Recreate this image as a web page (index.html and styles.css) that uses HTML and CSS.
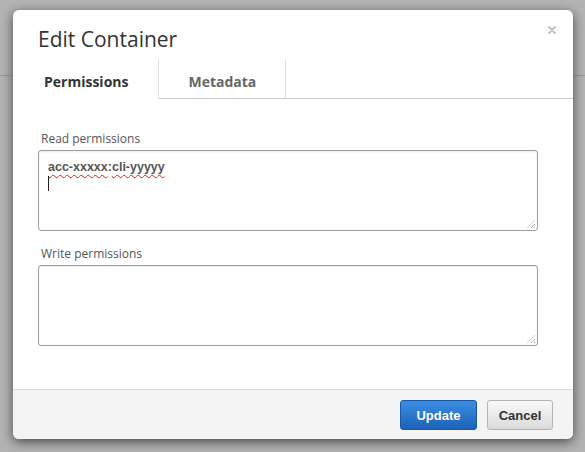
FILE: index.html
```html
<!DOCTYPE html>
<html>
<head>
<meta charset="utf-8">
<link rel="stylesheet" href="styles.css">
</head>
<body>
<div class="page">
  <div class="page-header"></div>
</div>
<div class="modal">
  <div class="modal-header">
    <h3 class="modal-title">Edit Container</h3>
    <svg class="close" width="8" height="8" viewBox="0 0 8 8"><path d="M1 1L7 7M7 1L1 7" stroke="#c2c2c2" stroke-width="2" stroke-linecap="round"/></svg>
  </div>
  <div class="tabs">
    <div class="tab tab-active">Permissions</div>
    <div class="tab">Metadata</div>
  </div>
  <div class="modal-body">
    <div class="label">Read permissions</div>
    <div class="field"><span class="misspelled">acc-xxxxx</span>:<span class="misspelled">cli-yyyyy</span><br><span class="caret"></span></div>
    <div class="label label-second">Write permissions</div>
    <div class="field"></div>
  </div>
  <div class="modal-footer">
    <button class="btn btn-primary">Update</button>
    <button class="btn btn-default">Cancel</button>
  </div>
</div>
</body>
</html>
```
FILE: styles.css
```css
html, body {
  margin: 0;
  padding: 0;
}
body {
  background: #b3b3b3;
  width: 585px;
  height: 452px;
  overflow: hidden;
  font-family: "Open Sans", "Liberation Sans", sans-serif;
}
.page-header {
  height: 75px;
  border-bottom: 1px solid #9c9c9c;
}
.modal {
  position: absolute;
  top: 10px;
  left: 13px;
  width: 560px;
  background: #fff;
  border-radius: 6px;
  box-shadow: 0 3px 12px rgba(0, 0, 0, 0.6);
}
.modal-header {
  display: flex;
  justify-content: space-between;
  align-items: flex-start;
  padding: 14px 17px 6px 25px;
}
.modal-title {
  margin: 0;
  font-size: 21px;
  line-height: 30px;
  font-weight: 400;
  color: #333;
}
.close {
  margin-top: 2px;
}
.tabs {
  display: flex;
  border-bottom: 1px solid #cccccc;
}
.tab {
  padding: 12px 29px 6px;
  line-height: 20px;
  font-size: 14px;
  font-weight: 700;
  color: #666;
  border-right: 1px solid #dedede;
}
.tab-active {
  padding-left: 31px;
  padding-right: 30px;
  color: #333;
  background: #fff;
  margin-bottom: -1px;
  border-bottom: 1px solid #fff;
}
.modal-body {
  padding: 32px 35px 43px 25px;
}
.label {
  font-size: 12px;
  line-height: 16px;
  color: #555;
  padding-left: 3px;
  margin-bottom: 3px;
}
.label-second {
  margin-top: 15px;
}
.field {
  position: relative;
  height: 63px;
  padding: 8px 9px;
  border: 1px solid #9d9d9d;
  border-radius: 3px;
  box-shadow: inset 0 1px 2px rgba(0, 0, 0, 0.08);
  font-family: "Liberation Sans", Arial, sans-serif;
  font-size: 12.5px;
  font-weight: 700;
  line-height: 16px;
  color: #555;
}
.field::after {
  content: "";
  position: absolute;
  right: 2px;
  bottom: 2px;
  width: 8px;
  height: 8px;
  background: repeating-linear-gradient(-45deg, #a8a8a8 0 1px, transparent 1px 2.5px);
  clip-path: polygon(100% 0, 100% 100%, 0 100%);
}
.misspelled {
  text-decoration: underline wavy #e02020;
  text-decoration-thickness: 1px;
  text-underline-offset: 3px;
}
.caret {
  display: inline-block;
  width: 1px;
  height: 15px;
  background: #222;
  vertical-align: -4px;
}
.modal-footer {
  display: flex;
  justify-content: flex-end;
  gap: 10px;
  padding: 10px 20px 9px;
  background: #f4f4f4;
  border-top: 1px solid #dcdcdc;
  border-radius: 0 0 6px 6px;
}
.btn {
  height: 30px;
  margin: 0;
  border-radius: 3px;
  font-family: "Liberation Sans", Arial, sans-serif;
  font-size: 13px;
  font-weight: 700;
  cursor: pointer;
}
.btn-primary {
  width: 77px;
  color: #fff;
  border: 1px solid #1b57a2;
  background: linear-gradient(#3c8ee2, #1c62b9);
}
.btn-default {
  width: 66px;
  color: #333;
  border: 1px solid #b4b4b4;
  background: linear-gradient(#fafafa, #dadada);
}
```
